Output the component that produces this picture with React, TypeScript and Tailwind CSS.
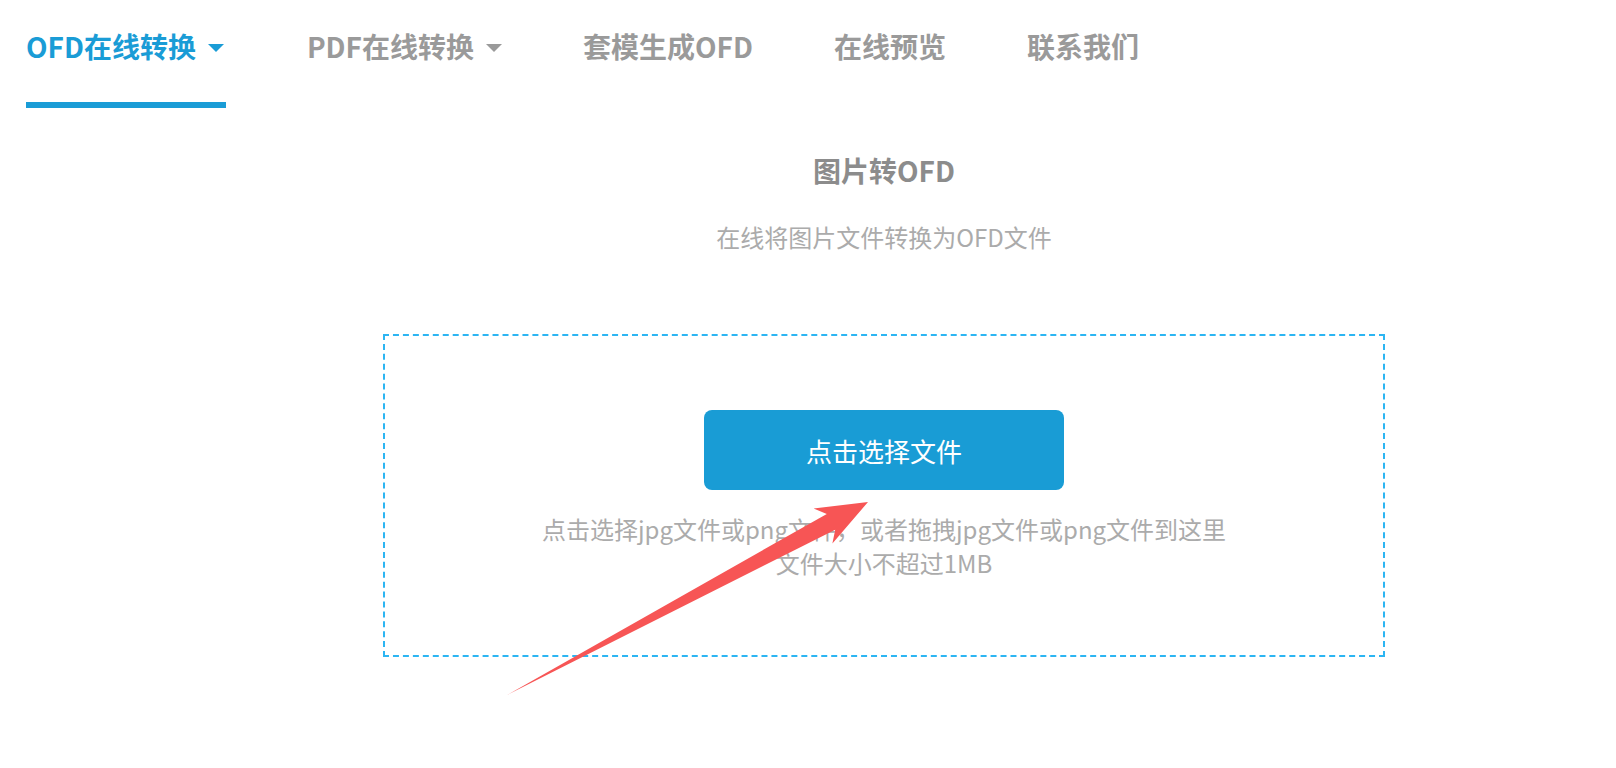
import React from 'react';

const navItems = [
  { label: 'OFD在线转换', dropdown: true, active: true },
  { label: 'PDF在线转换', dropdown: true, active: false },
  { label: '套模生成OFD', dropdown: false, active: false },
  { label: '在线预览', dropdown: false, active: false },
  { label: '联系我们', dropdown: false, active: false },
];

function Caret({ active }: { active: boolean }) {
  return (
    <svg
      width="16"
      height="8"
      viewBox="0 0 16 8"
      className={active ? 'mt-1 ml-3 mr-[2px]' : 'mt-1 ml-3'}
    >
      <path d="M0 0H16L8 8Z" fill={active ? '#1a9cd6' : '#9a9a9a'} />
    </svg>
  );
}

export default function App() {
  return (
    <div
      className="relative min-h-screen bg-white"
      style={{ fontFamily: '"Noto Sans CJK SC", "Noto Sans", sans-serif' }}
    >
      {/* Navbar */}
      <nav className="flex items-start gap-[81px] pl-[26px]">
        {navItems.map((item) => (
          <div
            key={item.label}
            className={
              item.active
                ? 'flex items-center h-[108px] pt-[26px] pb-[36px] border-b-[6px] border-[#1a9cd6] text-[#1a9cd6]'
                : 'flex items-center h-[108px] pt-[26px] pb-[36px] border-b-[6px] border-transparent text-[#9a9a9a]'
            }
          >
            <span className="text-[28px] leading-[40px] font-bold">{item.label}</span>
            {item.dropdown && <Caret active={item.active} />}
          </div>
        ))}
      </nav>

      {/* Main */}
      <main className="flex flex-col items-center pl-[152px]">
        <h1 className="mt-[42px] text-[28px] leading-[40px] font-bold text-[#8c8c8c]">图片转OFD</h1>
        <p className="mt-[30px] text-[24px] leading-[34px] text-[#ababab]">在线将图片文件转换为OFD文件</p>

        <div className="mt-[80px] w-[1002px] border-2 border-dashed border-[#2cb5f2] pt-[74px] pb-[75px] flex flex-col items-center">
          <button className="w-[360px] h-[80px] rounded-lg bg-[#199cd5] text-white text-[26px]">
            点击选择文件
          </button>
          <div className="mt-[22px] text-[24px] leading-[34px] text-[#ababab] text-center">
            <p>点击选择jpg文件或png文件，或者拖拽jpg文件或png文件到这里</p>
            <p>文件大小不超过1MB</p>
          </div>
        </div>
      </main>

      {/* Annotation arrow */}
      <svg
        className="absolute left-0 top-0 pointer-events-none"
        width="1616"
        height="768"
        viewBox="0 0 1616 768"
      >
        <polygon
          points="507,695 826.8,513.9 813.6,508.4 868,502 832.4,543.6 835.2,529.7"
          fill="#f75555"
        />
      </svg>
    </div>
  );
}
